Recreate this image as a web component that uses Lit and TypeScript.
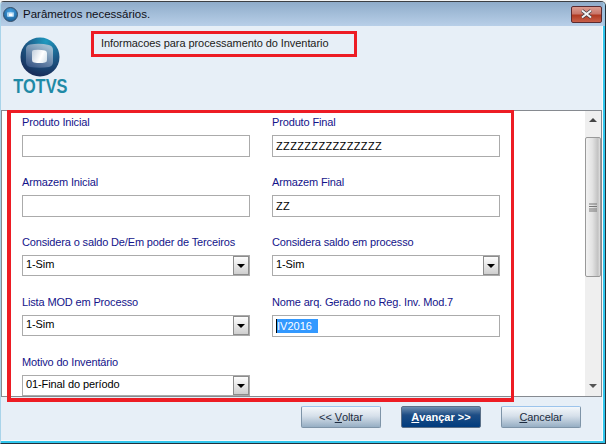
import { LitElement, html, css } from "lit";
import { customElement } from "lit/decorators.js";

type F = { label: string; value?: string; select?: boolean; selected?: boolean; wide?: boolean };
const fields: F[] = [
  { label: "Produto Inicial", value: "" },
  { label: "Produto Final", value: "ZZZZZZZZZZZZZZZ", wide: true },
  { label: "Armazem Inicial", value: "" },
  { label: "Armazem Final", value: "ZZ", wide: true },
  { label: "Considera o saldo De/Em poder de Terceiros", value: "1-Sim", select: true },
  { label: "Considera saldo em processo", value: "1-Sim", select: true },
  { label: "Lista MOD em Processo", value: "1-Sim", select: true },
  { label: "Nome arq. Gerado no Reg. Inv. Mod.7", value: "IV2016", selected: true },
  { label: "Motivo do Inventário", value: "01-Final do período", select: true },
];

@customElement("app-root")
export class AppRoot extends LitElement {
  static styles = css`
    :host {
      display: block;
      box-sizing: border-box;
      width: 606px;
      height: 444px;
      padding-top: 1px;
      background: #f4f4f4;
      font-family: "Liberation Sans", Arial, sans-serif;
      font-size: 11px;
    }
    .win {
      position: relative;
      box-sizing: border-box;
      width: 606px;
      height: 443px;
      background: #e7eff7;
      border-top: 1px solid #3c3f44;
      border-right: 1px solid #22303a;
      border-bottom: 1px solid #22303a;
      border-left: 1px solid #a9d4ea;
      border-radius: 4px 5px 0 0;
      box-shadow: inset -2px -2px 0 #31c6ec, inset -3px -3px 0 #f6f9fc;
      display: flex;
      flex-direction: column;
      overflow: hidden;
    }
    .title {
      height: 24px;
      flex: none;
      display: flex;
      align-items: center;
      padding: 0 3px 0 2px;
      gap: 5px;
      background: linear-gradient(#8facca, #b8cfe8);
      box-shadow: inset -2px 0 0 #9fc4e0;
      font-size: 11.5px;
      color: #101018;
    }
    .title span { flex: 1; }
    .close {
      width: 31px;
      height: 17px;
      box-sizing: border-box;
      border: 1px solid #5a2a30;
      border-radius: 2px;
      background: linear-gradient(#dc9c90 0, #c9766a 45%, #b03a22 55%, #c8604a 100%);
      display: flex;
      align-items: center;
      justify-content: center;
    }
    .head {
      height: 84px;
      flex: none;
      box-sizing: border-box;
      display: flex;
      align-items: flex-start;
    }
    .logo {
      width: 90px;
      flex: none;
      display: flex;
      flex-direction: column;
      align-items: center;
      padding-top: 11px;
      padding-right: 12px;
      box-sizing: border-box;
    }
    .logo b {
      font-size: 19.5px;
      line-height: 17px;
      color: #1f8aa6;
      margin-top: 1px;
      transform: scaleX(0.84);
    }
    .banner {
      box-sizing: border-box;
      margin-top: 5px;
      width: 266px;
      height: 26px;
      border: 3px solid #ed1c24;
      padding-left: 7px;
      line-height: 19px;
      color: #1c1c20;
      letter-spacing: -0.07px;
    }
    .panel {
      box-sizing: border-box;
      height: 287px;
      margin-right: 3px;
      flex: none;
      display: flex;
      background: #fff;
      border: 1px solid #868a90;
      overflow: hidden;
    }
    .form {
      flex: 1;
      display: grid;
      grid-template-columns: 228px 228px;
      column-gap: 22px;
      grid-auto-rows: 60px;
      padding: 2px 0 0 20px;
    }
    .field { display: flex; flex-direction: column; }
    .field label {
      height: 22px;
      line-height: 18px;
      color: #14148a;
      white-space: nowrap;
      letter-spacing: -0.15px;
    }
    .input {
      box-sizing: border-box;
      height: 22px;
      border: 1px solid #ababab;
      background: #fff;
      color: #000;
      display: flex;
      align-items: center;
      padding-left: 3px;
      white-space: nowrap;
      letter-spacing: -0.1px;
    }
    .input.wide { letter-spacing: 0.35px; }
    .sel { height: 21px; padding-right: 0; }
    .sel span { flex: 1; line-height: 17px; padding-bottom: 2px; }
    .sel i {
      width: 16px;
      height: 19px;
      box-sizing: border-box;
      border: 1px solid #6e6e6e;
      outline: 1px solid #8c8c8c;
      outline-offset: -1px;
      background: linear-gradient(#fdfdfd, #cfcfcf);
      display: flex;
      align-items: center;
      justify-content: center;
    }
    .sel i::after {
      content: "";
      border: 4px solid transparent;
      border-top: 4px solid #000;
      border-bottom: 0;
    }
    .hl {
      background: #3399ff;
      color: #fff;
      border-left: 1px solid #000;
      padding: 1px 6px 1px 0;
      letter-spacing: 0;
    }
    .scroll {
      width: 16px;
      flex: none;
      background: #efefef;
      display: flex;
      flex-direction: column;
      align-items: center;
    }
    .arrow {
      flex: none;
      height: 26px;
      box-sizing: border-box;
      padding-bottom: 8px;
      width: 100%;
      display: flex;
      align-items: center;
      justify-content: center;
    }
    .arrow::after {
      content: "";
      border: 4px solid transparent;
      border-bottom: 4px solid #444;
      border-top: 0;
    }
    .arrow.down { height: 18px; padding-bottom: 2px; margin-top: auto; }
    .arrow.down::after {
      border-top: 4px solid #555;
      border-bottom: 0;
    }
    .thumb {
      box-sizing: border-box;
      width: 16px;
      height: 140px;
      border: 1px solid #999;
      border-radius: 2px;
      background: linear-gradient(90deg, #f2f2f2, #e3e3e3 45%, #c2c2c2 85%, #e0e0e0);
      display: flex;
      align-items: center;
      justify-content: center;
    }
    .foot {
      flex: 1;
      display: flex;
      justify-content: flex-end;
      gap: 20px;
      padding: 9px 24px 0 0;
    }
    .btn {
      box-sizing: border-box;
      width: 80px;
      height: 22px;
      border: 1px solid #7e94a8;
      border-top-color: #9cc4ec;
      border-radius: 2px;
      background: linear-gradient(#f3f7fb 0, #d6e0ea 45%, #96aec4 100%);
      color: #1c2c40;
      display: flex;
      align-items: center;
      justify-content: center;
      letter-spacing: -0.1px;
    }
    .btn u { text-underline-offset: 1px; }
    .btn.pri {
      background: linear-gradient(#6f8fb0 0, #1d4d85 40%, #013c7e 100%);
      border-color: #5b7088;
      color: #fff;
      font-weight: bold;
      letter-spacing: 0;
    }
    .mark {
      position: absolute;
      left: 6px;
      top: 108px;
      width: 507px;
      height: 292px;
      box-sizing: border-box;
      border: 3px solid #ed1c24;
      border-left-width: 4px;
      border-bottom-width: 4px;
      pointer-events: none;
    }
  `;

  private field(f: F) {
    return html`<div class="field">
      <label>${f.label}</label>
      ${f.select
        ? html`<div class="input sel"><span>${f.value}</span><i></i></div>`
        : html`<div class="input ${f.wide ? "wide" : ""}">${f.selected ? html`<span class="hl">${f.value}</span>` : f.value}</div>`}
    </div>`;
  }

  render() {
    return html`<div class="win">
      <div class="title">
        <svg width="15" height="15" viewBox="0 0 15 15">
          <defs>
            <radialGradient id="ti" cx="0.5" cy="0.35" r="0.7">
              <stop offset="0" stop-color="#4aa8ea"/>
              <stop offset="1" stop-color="#14588f"/>
            </radialGradient>
          </defs>
          <circle cx="7.5" cy="7.5" r="7" fill="url(#ti)" stroke="#3a5068" stroke-width="1"/>
          <path d="M4 5.5 Q7.5 4.5 11 5.5 L11 9.5 Q7.5 10.5 4 9.5 Z" fill="#a8d4f2"/>
          <path d="M6 6.5 H9.5 V9 H6 Z" fill="#ffffff"/>
        </svg>
        <span>Parâmetros necessários.</span>
        <div class="close">
          <svg width="13" height="10" viewBox="0 0 13 10">
            <path d="M2 1.5 L11 8.5 M11 1.5 L2 8.5" stroke="#3c3c44" stroke-width="3.4"/>
            <path d="M2 1.5 L11 8.5 M11 1.5 L2 8.5" stroke="#f4f4f4" stroke-width="2"/>
          </svg>
        </div>
      </div>
      <div class="head">
        <div class="logo">
          <svg width="40" height="40" viewBox="0 0 40 40">
            <defs>
              <radialGradient id="lg" cx="0.65" cy="0.1" r="1">
                <stop offset="0" stop-color="#1f9ac0"/>
                <stop offset="0.45" stop-color="#1d5f8c"/>
                <stop offset="1" stop-color="#17224f"/>
              </radialGradient>
              <linearGradient id="lo" x1="0" y1="1" x2="0.6" y2="0">
                <stop offset="0" stop-color="#2f4d80"/>
                <stop offset="1" stop-color="#9fbcd0"/>
              </linearGradient>
              <linearGradient id="li" x1="0" y1="0.3" x2="1" y2="0.7">
                <stop offset="0" stop-color="#ccd6e2"/>
                <stop offset="0.6" stop-color="#ffffff"/>
                <stop offset="1" stop-color="#dbe6ee"/>
              </linearGradient>
            </defs>
            <circle cx="20" cy="20" r="19.5" fill="url(#lg)"/>
            <path d="M6 12 Q6 8 10 7.5 Q20 6 29 8 Q33 9 33 13 L33 25 Q33 29 29 30 Q20 31.5 10 30 Q6 29 6 25 Z" fill="url(#lo)"/>
            <path d="M12 15 Q12 13 14 13 Q20 12.5 25 13.5 Q27 14 27 16 L27 23 Q27 25 25 25.5 Q20 26.5 14 25.5 Q12 25 12 23 Z" fill="url(#li)"/>
          </svg>
          <b>TOTVS</b>
        </div>
        <div class="banner">Informacoes para processamento do Inventario</div>
      </div>
      <div class="panel">
        <div class="form">${fields.map((f) => this.field(f))}</div>
        <div class="scroll">
          <div class="arrow"></div>
          <div class="thumb">
            <svg width="8" height="9" viewBox="0 0 8 9">
              <path d="M0 1H8M0 3.5H8M0 6H8M0 8H8" stroke="#777" stroke-width="1"/>
            </svg>
          </div>
          <div class="arrow down"></div>
        </div>
      </div>
      <div class="foot">
        <div class="btn">&lt;&lt;&nbsp;<u>V</u>oltar</div>
        <div class="btn pri"><u>A</u>vançar &gt;&gt;</div>
        <div class="btn"><u>C</u>ancelar</div>
      </div>
      <div class="mark"></div>
    </div>`;
  }
}
